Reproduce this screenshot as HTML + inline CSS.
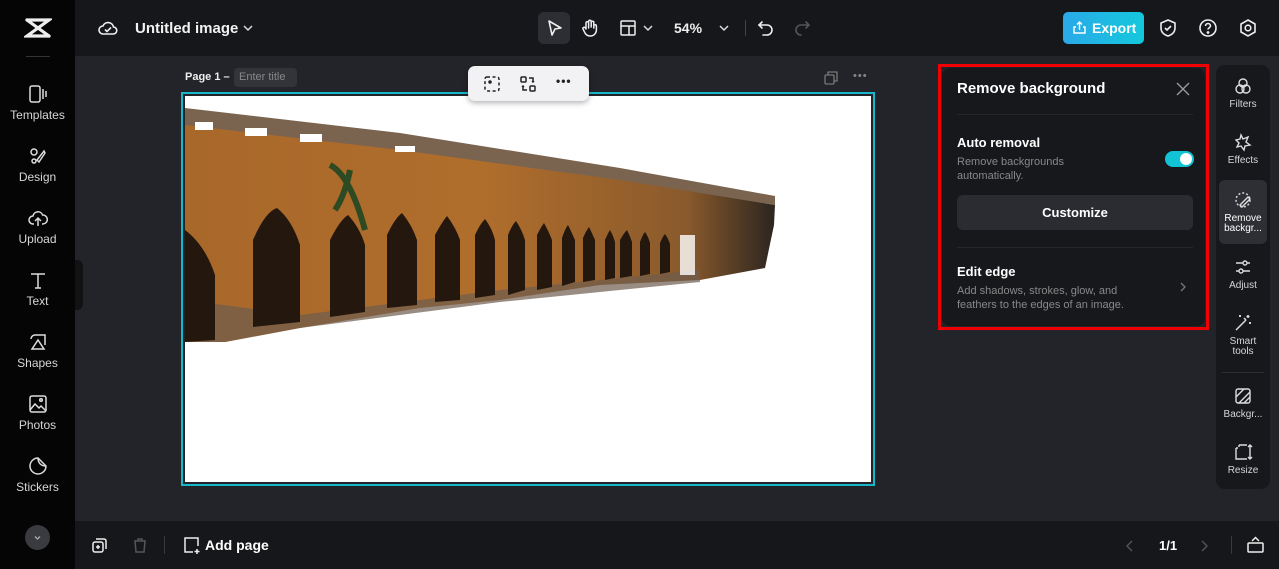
<!DOCTYPE html>
<html><head><meta charset="utf-8"><style>
*{box-sizing:border-box;margin:0;padding:0}
body{width:1279px;height:569px;overflow:hidden;background:#232429;font-family:"Liberation Sans",sans-serif;color:#fff;position:relative}
.abs{position:absolute}
.side{left:0;top:0;width:75px;height:569px;background:#050506}
.top{left:75px;top:0;width:1204px;height:56px;background:#16171a}
.bot{left:75px;top:521px;width:1204px;height:48px;background:#16171a}
.nav{position:absolute;left:0;width:75px;text-align:center;font-size:12px;color:#d6d6d8}
.nav svg{display:block;margin:0 auto 4px}
.rt{position:absolute;left:1216px;width:54px;text-align:center;font-size:10px;color:#d6d6d8;line-height:10px}
.rt svg{display:block;margin:0 auto 4px}
</style></head><body>
<div class="abs side"></div>
<div class="abs top"></div>
<div class="abs bot"></div>
<svg class="abs" style="left:24px;top:16px" width="28" height="24" viewBox="0 0 28 24" fill="none" stroke="#eee" stroke-width="3.2" stroke-linecap="round"><path d="M3 4h22L3 20h22"/><path d="M3 4l22 16"/></svg>
<div class="abs" style="left:26px;top:56px;width:24px;height:1px;background:#333"></div>
<div class="nav" style="top:84px"><svg width="20" height="20" viewBox="0 0 20 20" fill="none" stroke="#ddd" stroke-width="1.5"><rect x="2" y="2" width="10" height="16" rx="2"/><path d="M15 5v10M18 7v6"/></svg>Templates</div>
<div class="nav" style="top:146px"><svg width="20" height="20" viewBox="0 0 20 20" fill="none" stroke="#ddd" stroke-width="1.5"><circle cx="6" cy="6" r="3"/><path d="M9 14l7-9 1 2-6 9z"/><circle cx="6" cy="15" r="2"/></svg>Design</div>
<div class="nav" style="top:208px"><svg width="20" height="20" viewBox="0 0 20 20" fill="none" stroke="#ddd" stroke-width="1.5"><path d="M6 16H5a4 4 0 010-8 5 5 0 019.6-1A4 4 0 0115 16h-1"/><path d="M10 18V10M7 13l3-3 3 3"/></svg>Upload</div>
<div class="nav" style="top:270px"><svg width="20" height="20" viewBox="0 0 20 20" fill="none" stroke="#ddd" stroke-width="1.5"><path d="M3 4h14M10 4v14M7 18h6"/></svg>Text</div>
<div class="nav" style="top:332px"><svg width="20" height="20" viewBox="0 0 20 20" fill="none" stroke="#ddd" stroke-width="1.5"><path d="M7 3h10v10M3 7a4 4 0 014-4"/><path d="M10 8l6 9H4z"/></svg>Shapes</div>
<div class="nav" style="top:394px"><svg width="20" height="20" viewBox="0 0 20 20" fill="none" stroke="#ddd" stroke-width="1.5"><rect x="2" y="2" width="16" height="16" rx="2"/><path d="M2 16l5-6 4 4 2-2 5 5"/><circle cx="13" cy="6" r="1.3"/></svg>Photos</div>
<div class="nav" style="top:456px"><svg width="20" height="20" viewBox="0 0 20 20" fill="none" stroke="#ddd" stroke-width="1.5"><path d="M18 10a8 8 0 11-8-8l8 8z"/><path d="M10 2c0 5 3 8 8 8"/></svg>Stickers</div>
<div class="abs" style="left:25px;top:525px;width:25px;height:25px;border-radius:50%;background:#3a3b40"></div>
<svg class="abs" style="left:32px;top:532px" width="11" height="11" viewBox="0 0 11 11" fill="none" stroke="#aaa" stroke-width="1.3"><path d="M3 4.5l2.5 2.5 2.5-2.5"/></svg>
<div class="abs" style="left:75px;top:260px;width:8px;height:50px;background:#111214;border-radius:0 6px 6px 0"></div>
<svg class="abs" style="left:97px;top:18px" width="22" height="20" viewBox="0 0 22 20" fill="none" stroke="#eee" stroke-width="1.6"><path d="M6 16a4 4 0 010-8 5.5 5.5 0 0110.5 1A3.5 3.5 0 0116 16z"/><path d="M8 11.5l2 2 4-4"/></svg>
<div class="abs" style="left:135px;top:20px;font-size:15px;font-weight:bold;color:#f2f2f2">Untitled image</div>
<svg class="abs" style="left:242px;top:22px" width="12" height="12" viewBox="0 0 12 12" fill="none" stroke="#ddd" stroke-width="1.5"><path d="M2 4l4 4 4-4"/></svg>
<div class="abs" style="left:538px;top:12px;width:32px;height:32px;border-radius:6px;background:#2d2e33"></div>
<svg class="abs" style="left:546px;top:19px" width="18" height="18" viewBox="0 0 18 18" fill="none" stroke="#eee" stroke-width="1.6" stroke-linejoin="round"><path d="M3 2l12 7-6 1-3 6z"/></svg>
<svg class="abs" style="left:580px;top:18px" width="20" height="20" viewBox="0 0 20 20" fill="none" stroke="#eee" stroke-width="1.5" stroke-linecap="round"><path d="M6 11V5a1.3 1.3 0 012.6 0v5M8.6 9V3.5a1.3 1.3 0 012.6 0V9M11.2 9V4.5a1.3 1.3 0 012.6 0V10M13.8 8a1.3 1.3 0 012.6 0v4a6 6 0 01-6 6H10a6 6 0 01-5-3l-2-4a1.3 1.3 0 012.2-1.3L6 11"/></svg>
<svg class="abs" style="left:619px;top:19px" width="18" height="18" viewBox="0 0 18 18" fill="none" stroke="#eee" stroke-width="1.5"><rect x="2" y="2" width="14" height="14" rx="1"/><path d="M2 7h14M10 7v9"/></svg>
<svg class="abs" style="left:642px;top:22px" width="12" height="12" viewBox="0 0 12 12" fill="none" stroke="#ddd" stroke-width="1.5"><path d="M2 4l4 4 4-4"/></svg>
<div class="abs" style="left:674px;top:20px;font-size:14px;font-weight:bold;color:#eee">54%</div>
<svg class="abs" style="left:718px;top:22px" width="12" height="12" viewBox="0 0 12 12" fill="none" stroke="#ddd" stroke-width="1.5"><path d="M2 4l4 4 4-4"/></svg>
<div class="abs" style="left:745px;top:20px;width:1px;height:16px;background:#444"></div>
<svg class="abs" style="left:757px;top:19px" width="18" height="18" viewBox="0 0 18 18" fill="none" stroke="#eee" stroke-width="1.6" stroke-linecap="round"><path d="M5 3L2 6l3 3"/><path d="M2 6h8a5 5 0 010 10H6"/></svg>
<svg class="abs" style="left:793px;top:19px" width="18" height="18" viewBox="0 0 18 18" fill="none" stroke="#555" stroke-width="1.6" stroke-linecap="round"><path d="M13 3l3 3-3 3"/><path d="M16 6H8a5 5 0 000 10"/></svg>
<div class="abs" style="left:1063px;top:12px;width:81px;height:32px;border-radius:5px;background:linear-gradient(90deg,#2aa9e8,#14c8dc)"></div>
<svg class="abs" style="left:1072px;top:20px" width="15" height="15" viewBox="0 0 15 15" fill="none" stroke="#fff" stroke-width="1.4"><path d="M4 7H2v6h11V7h-2M7.5 10V2M5 4.5L7.5 2 10 4.5"/></svg>
<div class="abs" style="left:1092px;top:20px;font-size:14px;font-weight:bold">Export</div>
<svg class="abs" style="left:1158px;top:18px" width="20" height="20" viewBox="0 0 20 20" fill="none" stroke="#eee" stroke-width="1.6"><path d="M10 2l7 3v5c0 4-3 7-7 8-4-1-7-4-7-8V5z"/><path d="M7 10l2 2 4-4"/></svg>
<svg class="abs" style="left:1198px;top:18px" width="20" height="20" viewBox="0 0 20 20" fill="none" stroke="#eee" stroke-width="1.6"><circle cx="10" cy="10" r="8"/><path d="M7.5 8a2.5 2.5 0 115 0c0 1.5-2.5 2-2.5 3.5"/><circle cx="10" cy="14.5" r=".6" fill="#eee"/></svg>
<svg class="abs" style="left:1238px;top:18px" width="20" height="20" viewBox="0 0 20 20" fill="none" stroke="#eee" stroke-width="1.6"><path d="M10 2l7 4v8l-7 4-7-4V6z"/><circle cx="10" cy="10" r="2.8"/></svg>
<div class="abs" style="left:185px;top:71px;font-size:11px;font-weight:bold;color:#eee">Page 1 –</div>
<div class="abs" style="left:234px;top:68px;width:63px;height:19px;border-radius:4px;background:#33343a;font-size:11px;color:#888;padding:3px 5px">Enter title</div>
<svg class="abs" style="left:824px;top:71px" width="14" height="14" viewBox="0 0 14 14" fill="none" stroke="#888" stroke-width="1.1"><rect x="1" y="4" width="9" height="9" rx="1"/><path d="M4 4V1h9v9h-3"/></svg>
<div class="abs" style="left:853px;top:70px;font-size:11px;color:#888;letter-spacing:1px">•••</div>
<div class="abs" style="left:181px;top:92px;width:694px;height:394px;border:2px solid #17b6c9;background:#232429"></div>
<div class="abs" style="left:185px;top:96px;width:686px;height:386px;background:#fff"></div>
<svg class="abs" style="left:185px;top:96px" width="686" height="386" viewBox="185 96 686 386">
<defs><linearGradient id="w" x1="0" y1="0" x2="1" y2="0"><stop offset="0" stop-color="#a8682a"/><stop offset=".5" stop-color="#b06e2c"/><stop offset=".85" stop-color="#8a5a2c"/><stop offset="1" stop-color="#2c2520"/></linearGradient></defs>
<path d="M185 120 L400 145 L620 178 L775 205 L774 225 L765 268 L700 280 L600 285 L500 300 L420 308 L300 328 L225 342 L185 342 Z" fill="url(#w)"/>
<path d="M185 108 L400 133 L620 168 L775 196 L775 205 L620 180 L400 150 L185 125Z" fill="#7a6450"/>
<g fill="#fff"><rect x="195" y="122" width="18" height="8"/><rect x="245" y="128" width="22" height="8"/><rect x="300" y="134" width="22" height="8"/><rect x="395" y="146" width="20" height="6"/></g>
<path d="M185 300 L300 315 L500 290 L700 270 L700 282 L500 302 L300 328 L225 342 L185 342Z" fill="#6d5d4f" opacity=".7"/>
<g fill="#24170e">
<path d="M185 230 Q205 245 215 275 L215 340 L185 342Z"/>
<path d="M253 327 L253 240 Q265 212 277 208 Q292 220 300 245 L300 322Z"/>
<path d="M330 317 L330 240 Q340 220 348 215 Q360 228 365 245 L365 312Z"/>
<path d="M387 308 L387 235 Q395 218 402 213 Q412 225 417 240 L417 305Z"/>
<path d="M435 302 L435 235 Q442 222 447 216 Q456 228 460 240 L460 300Z"/>
<path d="M475 298 L475 235 Q480 224 485 219 Q492 228 495 240 L495 295Z"/>
<path d="M508 295 L508 235 Q512 225 516 221 Q522 230 525 240 L525 290Z"/>
<path d="M537 290 L537 235 Q541 227 544 223 Q549 232 552 240 L552 287Z"/>
<path d="M562 286 L562 238 Q565 229 568 225 Q572 233 575 240 L575 282Z"/>
<path d="M583 282 L583 238 Q586 231 589 227 Q592 233 595 240 L595 280Z"/>
<path d="M605 280 L605 240 Q608 233 610 230 Q613 235 615 242 L615 278Z"/>
<path d="M620 278 L620 240 Q624 233 627 230 Q630 236 632 242 L632 276Z"/>
<path d="M640 276 L640 242 Q643 234 645 232 Q648 236 650 243 L650 274Z"/>
<path d="M660 274 L660 243 Q663 236 665 234 Q668 238 670 244 L670 272Z"/>
</g>
<rect x="680" y="235" width="15" height="40" fill="#fff" opacity=".8"/>
<path d="M330 165 Q350 175 365 230 M350 170 Q345 195 335 210" stroke="#2e4a22" stroke-width="6" fill="none"/>
</svg>
<div class="abs" style="left:468px;top:66px;width:121px;height:35px;border-radius:7px;background:#f2f2f4;box-shadow:0 2px 6px rgba(0,0,0,.3)"></div>
<svg class="abs" style="left:482px;top:74px" width="20" height="20" viewBox="0 0 20 20" fill="none" stroke="#222" stroke-width="1.5"><rect x="3" y="3" width="14" height="14" rx="2" stroke-dasharray="3 2.5"/><circle cx="8" cy="8" r="1" fill="#222"/></svg>
<svg class="abs" style="left:518px;top:74px" width="20" height="20" viewBox="0 0 20 20" fill="none" stroke="#222" stroke-width="1.5"><rect x="3" y="3" width="5" height="5" rx="1"/><rect x="12" y="12" width="5" height="5" rx="1"/><path d="M11 4h4v4M14 7l1 1 1-1M9 16H5v-4M4 13l1-1 1 1"/></svg>
<div class="abs" style="left:556px;top:74px;font-size:12px;color:#222;font-weight:bold;letter-spacing:1px">•••</div>
<div class="abs" style="left:938px;top:64px;width:271px;height:266px;border:3px solid #f00000"></div>
<div class="abs" style="left:942px;top:68px;width:263px;height:258px;background:#17181c;border-radius:8px"></div>
<div class="abs" style="left:957px;top:80px;font-size:15px;font-weight:bold">Remove background</div>
<svg class="abs" style="left:1176px;top:82px" width="14" height="14" viewBox="0 0 14 14" stroke="#999" stroke-width="1.4"><path d="M1 1l12 12M13 1L1 13"/></svg>
<div class="abs" style="left:957px;top:114px;width:236px;height:1px;background:#26272b"></div>
<div class="abs" style="left:957px;top:135px;font-size:13px;font-weight:bold">Auto removal</div>
<div class="abs" style="left:957px;top:155px;font-size:11px;color:#888;line-height:14px">Remove backgrounds<br>automatically.</div>
<div class="abs" style="left:1165px;top:151px;width:29px;height:16px;border-radius:8px;background:#12c3d6"></div>
<div class="abs" style="left:1180px;top:153px;width:12px;height:12px;border-radius:50%;background:#fff"></div>
<div class="abs" style="left:957px;top:195px;width:236px;height:35px;border-radius:6px;background:#2b2c31;text-align:center;font-size:13px;font-weight:bold;line-height:35px">Customize</div>
<div class="abs" style="left:957px;top:247px;width:236px;height:1px;background:#26272b"></div>
<div class="abs" style="left:957px;top:264px;font-size:13px;font-weight:bold">Edit edge</div>
<div class="abs" style="left:957px;top:284px;font-size:11px;color:#888;line-height:14px">Add shadows, strokes, glow, and<br>feathers to the edges of an image.</div>
<svg class="abs" style="left:1178px;top:281px" width="10" height="12" viewBox="0 0 10 12" fill="none" stroke="#777" stroke-width="1.3"><path d="M3 2l4 4-4 4"/></svg>
<div class="abs" style="left:1216px;top:65px;width:54px;height:424px;border-radius:9px;background:#17181c"></div>
<div class="abs" style="left:1219px;top:180px;width:48px;height:64px;border-radius:6px;background:#2e2f35"></div>
<div class="abs" style="left:1222px;top:372px;width:42px;height:1px;background:#2e2f33"></div>
<div class="rt" style="top:76px"><svg width="20" height="20" viewBox="0 0 20 20" fill="none" stroke="#ddd" stroke-width="1.4"><circle cx="10" cy="7" r="4"/><circle cx="7" cy="13" r="4"/><circle cx="13" cy="13" r="4"/></svg>Filters</div>
<div class="rt" style="top:132px"><svg width="20" height="20" viewBox="0 0 20 20" fill="none" stroke="#ddd" stroke-width="1.4"><path d="M8 3l2 4 5-2-2 5 4 3-5 1-1 4-3-4-4 1 2-4-3-3 4-1z"/></svg>Effects</div>
<div class="rt" style="top:190px;color:#fff"><svg width="20" height="20" viewBox="0 0 20 20" fill="none" stroke="#ddd" stroke-width="1.4"><circle cx="10" cy="10" r="7" stroke-dasharray="2 2"/><path d="M7 15l8-8 2 2-8 8z"/></svg>Remove<br>backgr...</div>
<div class="rt" style="top:257px"><svg width="20" height="20" viewBox="0 0 20 20" fill="none" stroke="#ddd" stroke-width="1.4"><path d="M3 6h14M3 14h14"/><circle cx="12" cy="6" r="2" fill="#17181c"/><circle cx="8" cy="14" r="2" fill="#17181c"/></svg>Adjust</div>
<div class="rt" style="top:313px"><svg width="20" height="20" viewBox="0 0 20 20" fill="none" stroke="#ddd" stroke-width="1.5"><path d="M3 17l10-10M11 5l2 2"/><path d="M15 2v3M13.5 3.5h3M17 9v2M16 10h2M7 2v2M6 3h2"/></svg>Smart<br>tools</div>
<div class="rt" style="top:386px"><svg width="20" height="20" viewBox="0 0 20 20" fill="none" stroke="#ddd" stroke-width="1.4"><rect x="3" y="3" width="14" height="14" rx="2"/><path d="M3 11l8-8M6 17L17 6M11 17l6-6"/></svg>Backgr...</div>
<div class="rt" style="top:442px"><svg width="20" height="20" viewBox="0 0 20 20" fill="none" stroke="#ddd" stroke-width="1.4"><path d="M3 6v11h11M6 3v2M3 6h2M17 3v14M15 5l2-2 2 2M15 15l2 2 2-2M6 3h8"/></svg>Resize</div>
<svg class="abs" style="left:91px;top:537px" width="17" height="17" viewBox="0 0 17 17" fill="none" stroke="#eee" stroke-width="1.5"><rect x="2" y="5" width="10" height="10" rx="2"/><path d="M5 2h8a2 2 0 012 2v8M7 8v4M5 10h4"/></svg>
<svg class="abs" style="left:132px;top:537px" width="16" height="17" viewBox="0 0 16 17" fill="none" stroke="#555" stroke-width="1.5"><path d="M2 4h12M6 4V2h4v2M3 4l1 11h8l1-11"/></svg>
<div class="abs" style="left:164px;top:536px;width:1px;height:18px;background:#3a3a3e"></div>
<svg class="abs" style="left:182px;top:536px" width="19" height="19" viewBox="0 0 19 19" fill="none" stroke="#eee" stroke-width="1.5"><path d="M11 16H3V2h13v8M15 13v5M12.5 15.5h5"/></svg>
<div class="abs" style="left:205px;top:537px;font-size:14px;font-weight:bold">Add page</div>
<svg class="abs" style="left:1124px;top:539px" width="12" height="14" viewBox="0 0 12 14" fill="none" stroke="#555" stroke-width="1.4"><path d="M8 2L3 7l5 5"/></svg>
<div class="abs" style="left:1159px;top:538px;font-size:13px;font-weight:bold">1/1</div>
<svg class="abs" style="left:1198px;top:539px" width="12" height="14" viewBox="0 0 12 14" fill="none" stroke="#555" stroke-width="1.4"><path d="M4 2l5 5-5 5"/></svg>
<div class="abs" style="left:1231px;top:536px;width:1px;height:18px;background:#3a3a3e"></div>
<svg class="abs" style="left:1246px;top:535px" width="19" height="19" viewBox="0 0 19 19" fill="none" stroke="#eee" stroke-width="1.5"><rect x="2" y="8" width="15" height="9" rx="1"/><path d="M6 6l3.5-3.5L13 6"/></svg>
</body></html>
